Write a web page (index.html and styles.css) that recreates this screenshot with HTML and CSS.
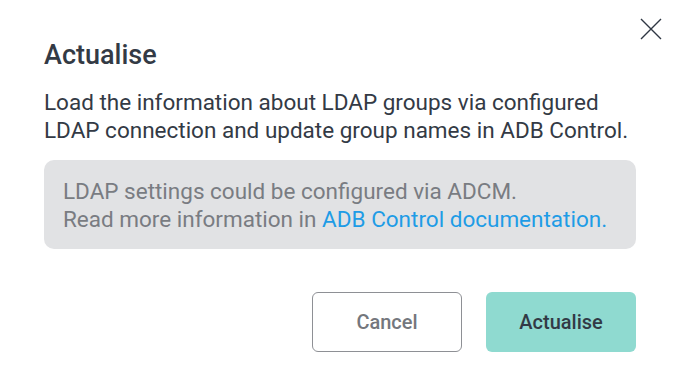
FILE: index.html
```html
<!DOCTYPE html>
<html>
<head>
<meta charset="utf-8">
<link rel="stylesheet" href="styles.css">
</head>
<body>
<div class="dialog">
  <button class="close" aria-label="Close">
    <svg width="22" height="22" viewBox="0 0 22 22"><path d="M1 1L21 21M21 1L1 21" stroke="#2f3743" stroke-width="1.4" fill="none"/></svg>
  </button>
  <h2 class="title">Actualise</h2>
  <p class="text">Load the information about LDAP groups via configured LDAP connection and update group names in ADB Control.</p>
  <div class="info">
    <div>LDAP settings could be configured via ADCM.</div>
    <div>Read more information in <a class="link" href="#">ADB Control documentation.</a></div>
  </div>
  <div class="actions">
    <button class="btn btn-cancel">Cancel</button>
    <button class="btn btn-primary">Actualise</button>
  </div>
</div>
</body>
</html>
```
FILE: styles.css
```css
html, body { margin: 0; padding: 0; background: #fff; }
body { font-family: Roboto, "Noto Sans", sans-serif; color: #333a45; }
.dialog { position: relative; width: 678px; height: 390px; box-sizing: border-box; padding: 39px 42px 0 44px; }
.close { position: absolute; top: 18px; right: 16px; background: none; border: 0; padding: 0; width: 22px; height: 22px; cursor: pointer; }
.close svg { display: block; }
.title { margin: 0; font-size: 27px; font-weight: 500; line-height: 32px; }
.text { margin: 17px 0 0; font-size: 22.5px; line-height: 28px; width: 592px; }
.info { margin-top: 16px; background: #e1e2e4; border-radius: 10px; padding: 17px 19px 16px; font-size: 22.5px; line-height: 28px; color: #797c82; }
.link { color: #1e9ce6; text-decoration: none; }
.actions { display: flex; justify-content: flex-end; gap: 24px; margin-top: 43px; }
.btn { width: 150px; height: 60px; border-radius: 6px; font-family: Roboto, sans-serif; font-size: 20px; font-weight: 500; box-sizing: border-box; cursor: pointer; }
.btn-cancel { background: #fff; border: 1px solid #8e9095; color: #74777d; }
.btn-primary { background: #8fdad0; border: 0; color: #323a45; }
```
